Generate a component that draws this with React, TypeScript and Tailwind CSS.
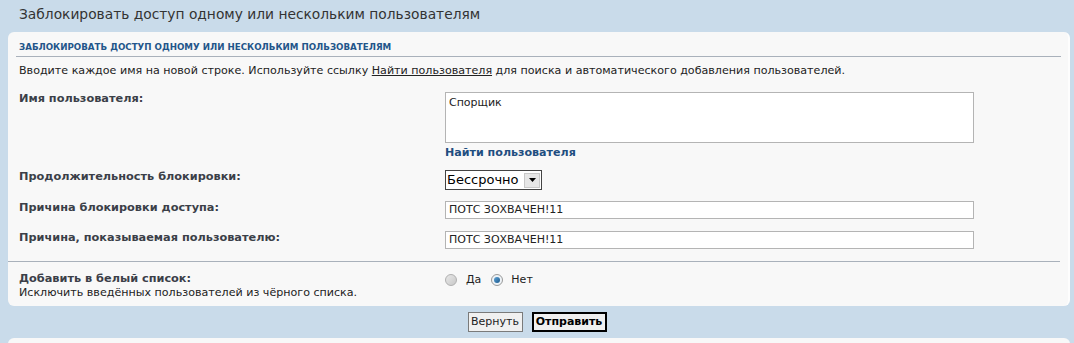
const font = { fontFamily: '"DejaVu Sans", Verdana, sans-serif' };

function Row({ label, sub, children, top }: { label: string; sub?: string; children: React.ReactNode; top?: string }) {
  return (
    <div className={`flex ${top ?? ''}`}>
      <div className="w-[426px] shrink-0">
        <div className="text-[11.3px] leading-[14px] font-bold text-[#3b3f48]">{label}</div>
        {sub && <div className="text-[11.1px] leading-[14px] text-[#222]">{sub}</div>}
      </div>
      <div className="flex-1">{children}</div>
    </div>
  );
}

export default function App() {
  return (
    <div className="w-[1074px] h-[343px] overflow-hidden bg-[#c9dbea]" style={font}>
      <div className="h-[32px] pl-[19px] pt-[5px]">
        <h1 className="text-[13.8px] leading-[18px] text-[#333]">Заблокировать доступ одному или нескольким пользователям</h1>
      </div>

      <div className="ml-[8px] mr-[4px] h-[274px] rounded-[6px] bg-[#f8f8f8] border-r-2 border-[#fdfdfd]">
        <div className="pt-[9px] pl-[11px]">
          <h2 className="text-[8.7px] leading-[12px] font-bold text-[#23558a]">
            ЗАБЛОКИРОВАТЬ ДОСТУП ОДНОМУ ИЛИ НЕСКОЛЬКИМ ПОЛЬЗОВАТЕЛЯМ
          </h2>
        </div>
        <div className="ml-[8px] mr-[7px] mt-[3px] border-b border-[#a9b1bb]" />
        <p className="pl-[11px] mt-[7px] text-[11.1px] leading-[14px] text-[#222]">
          Вводите каждое имя на новой строке. Используйте ссылку{' '}
          <a href="#" className="underline">Найти пользователя</a> для поиска и автоматического добавления пользователей.
        </p>

        <div className="pl-[11px] pr-[96px]">
          <Row label="Имя пользователя:" top="mt-[14px]">
            <div className="w-[529px] h-[51px] border border-[#b4b4b4] bg-white px-[3px] pt-[3px] text-[11px] leading-[14px] text-[#222]">
              Спорщик
            </div>
            <a href="#" className="block mt-[3px] text-[11.1px] leading-[14px] font-bold text-[#1f4e80]">Найти пользователя</a>
          </Row>

          <Row label="Продолжительность блокировки:" top="mt-[10px]">
            <div className="w-[97px] h-[20px] border border-[#444] bg-white flex items-center justify-between pl-[1px] pr-[1px]">
              <span className="text-[13px] leading-[16px] text-black">Бессрочно</span>
              <span className="w-[16px] h-[15px] bg-[#e6e6e6] border border-[#c8c8c8] flex items-center justify-center">
                <svg width="7" height="4" viewBox="0 0 7 4"><path d="M0 0h7L3.5 4z" fill="#000" /></svg>
              </span>
            </div>
          </Row>

          <Row label="Причина блокировки доступа:" top="mt-[11px]">
            <div className="w-[529px] h-[18px] border border-[#b4b4b4] bg-white px-[3px] text-[11px] leading-[16px] text-[#222]">
              ПОТС ЗОХВАЧЕН!11
            </div>
          </Row>

          <Row label="Причина, показываемая пользователю:" top="mt-[12px]">
            <div className="w-[529px] h-[18px] border border-[#b4b4b4] bg-white px-[3px] text-[11px] leading-[16px] text-[#222]">
              ПОТС ЗОХВАЧЕН!11
            </div>
          </Row>
        </div>

        <div className="mt-[12px] mr-[8px] border-b border-[#a9b1bb]" />

        <div className="pl-[11px] mt-[10px]">
          <Row label="Добавить в белый список:" sub="Исключить введённых пользователей из чёрного списка.">
            <div className="flex items-center mt-[1px] text-[11px] leading-[14px] text-[#222]">
              <span className="w-[12px] h-[12px] rounded-full border border-[#b0b0b0] bg-gradient-to-br from-[#e8e8e8] to-[#c8c8c8]" />
              <span className="ml-[9px]">Да</span>
              <span className="ml-[10px] w-[12px] h-[12px] rounded-full border border-[#9a9a9a] bg-[#eef3f7] flex items-center justify-center">
                <span className="w-[6px] h-[6px] rounded-full bg-gradient-to-br from-[#5ea3d6] to-[#1b5a8d]" />
              </span>
              <span className="ml-[8px]">Нет</span>
            </div>
          </Row>
        </div>
      </div>

      <div className="h-[32px] flex items-center justify-center gap-[9px]">
        <button className="h-[20px] w-[55px] border border-[#7a7a7a] bg-[#f0f0f0] text-[11px] text-[#222]">Вернуть</button>
        <button className="h-[20px] w-[75px] border-2 border-black bg-[#f0f0f0] text-[11px] font-bold text-black">Отправить</button>
      </div>

      <div className="ml-[8px] mr-[4px] h-[20px] rounded-t-[6px] bg-[#f8f8f8]" />
    </div>
  );
}
